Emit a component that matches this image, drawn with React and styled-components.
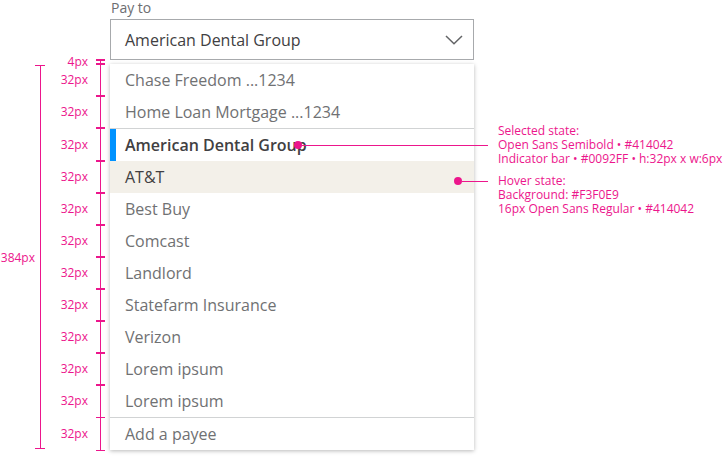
import styled, { createGlobalStyle } from "styled-components";

const PINK = "#EC168C";

const GlobalStyle = createGlobalStyle`
  body {
    margin: 0;
    background: #fff;
    font-family: "Open Sans", sans-serif;
  }
`;

const Page = styled.div`
  display: grid;
  grid-template-columns: 110px 364px;
  grid-template-rows: 19px 41px 4px 386px;
  width: 726px;
  height: 461px;
  overflow: hidden;
`;

const FieldLabel = styled.div`
  grid-column: 2;
  font-size: 14px;
  line-height: 16px;
  color: #6d6e71;
  padding-left: 1px;
`;

const Select = styled.div`
  grid-column: 2;
  box-sizing: border-box;
  display: flex;
  align-items: center;
  justify-content: space-between;
  padding: 0 10px 0 14px;
  border: 1px solid #a7a9ac;
  font-size: 16px;
  color: #414042;

  svg {
    width: 18px;
    height: 10px;
  }
`;

const Gutter = styled.div`
  grid-column: 1;
  display: flex;
`;

const TotalLabel = styled.div`
  width: 35px;
  align-self: center;
  text-align: right;
  font-size: 12px;
  color: ${PINK};
`;

const Bracket = styled.div`
  box-sizing: border-box;
  width: 10px;
  height: 384px;
  margin-top: 1px;
  border-top: 1.5px solid ${PINK};
  border-bottom: 1.5px solid ${PINK};
  background: linear-gradient(${PINK}, ${PINK}) no-repeat center / 1px 100%;
`;

const Measures = styled.div`
  display: flex;
  flex-direction: column;
`;

const MeasureRow = styled.div`
  display: flex;
  align-items: center;
  height: ${(p) => p.$h}px;
  margin-left: ${(p) => p.$indent || 0}px;
`;

const MeasureText = styled.span`
  width: 43px;
  text-align: right;
  padding-right: 8px;
  font-size: 12px;
  line-height: 12px;
  color: ${PINK};
`;

const Tick = styled.div`
  position: relative;
  width: 9px;
  height: 100%;

  &::before {
    content: "";
    position: absolute;
    left: 4px;
    top: 0;
    bottom: 0;
    width: 1px;
    background: ${PINK};
  }

  &::after {
    content: "";
    position: absolute;
    left: 0;
    top: -1px;
    width: 9px;
    height: 1.5px;
    background: ${PINK};
  }
`;

const LastTick = styled(Tick)`
  border-bottom: 1.5px solid ${PINK};
  box-sizing: border-box;
  margin-bottom: -1px;
`;

const List = styled.div`
  grid-column: 2;
  display: flex;
  flex-direction: column;
  background: #fff;
  box-shadow: 0 1px 4px rgba(0, 0, 0, 0.28);
`;

const Item = styled.div`
  position: relative;
  height: 32px;
  line-height: 32px;
  padding-left: 15px;
  font-size: 16px;
  font-weight: ${(p) => (p.$selected ? 600 : 400)};
  color: ${(p) => (p.$selected || p.$hover ? "#414042" : "#707173")};
  background: ${(p) => (p.$hover ? "#F3F0E9" : "transparent")};
  white-space: nowrap;

  ${(p) =>
    p.$selected &&
    `
    &::before {
      content: "";
      position: absolute;
      left: 0;
      top: 0;
      width: 6px;
      height: 32px;
      background: #0092FF;
    }
  `}
`;

const Divider = styled.div`
  height: 1px;
  background: #d1d3d4;
`;

const Callout = styled.div`
  position: absolute;
  left: ${(p) => p.$left}px;
  top: ${(p) => p.$top};
  transform: ${(p) => (p.$center ? "translateY(-50%)" : "none")};
  display: flex;
  align-items: ${(p) => (p.$center ? "center" : "flex-start")};
  font-weight: 400;
`;

const Connector = styled.div`
  display: flex;
  align-items: center;
  height: 14px;
`;

const Dot = styled.span`
  width: 8px;
  height: 8px;
  border-radius: 50%;
  background: ${PINK};
`;

const Lead = styled.span`
  width: ${(p) => p.$w}px;
  height: 1px;
  background: ${PINK};
`;

const Note = styled.div`
  margin-left: 10px;
  font-size: 12px;
  line-height: 14px;
  color: ${PINK};
  white-space: nowrap;
`;

const Chevron = () => (
  <svg viewBox="0 0 18 10" fill="none">
    <path d="M1 1 L9 8.8 L17 1" stroke="#636466" strokeWidth="1.5" />
  </svg>
);

const items = [
  { name: "Chase Freedom ...1234" },
  { name: "Home Loan Mortgage ...1234", divider: true },
  { name: "American Dental Group", selected: true },
  { name: "AT&T", hover: true },
  { name: "Best Buy" },
  { name: "Comcast" },
  { name: "Landlord" },
  { name: "Statefarm Insurance" },
  { name: "Verizon" },
  { name: "Lorem ipsum" },
  { name: "Lorem ipsum", divider: true },
  { name: "Add a payee" },
];

export default function App() {
  return (
    <>
      <GlobalStyle />
      <Page>
        <FieldLabel>Pay to</FieldLabel>
        <Select>
          American Dental Group
          <Chevron />
        </Select>

        <Gutter>
          <MeasureRow $h={4} $indent={45}>
            <MeasureText>4px</MeasureText>
            <Tick />
          </MeasureRow>
        </Gutter>

        <Gutter>
          <TotalLabel>384px</TotalLabel>
          <Bracket />
          <Measures>
            {items.map((it, i) => {
              const h = i > 0 && items[i - 1].divider ? 33 : 32;
              const Mark = i === items.length - 1 ? LastTick : Tick;
              return (
                <MeasureRow key={i} $h={h}>
                  <MeasureText>32px</MeasureText>
                  <Mark />
                </MeasureRow>
              );
            })}
          </Measures>
        </Gutter>

        <List>
          {items.map((it, i) => (
            <div key={i}>
              <Item $selected={it.selected} $hover={it.hover}>
                {it.name}
                {it.selected && (
                  <Callout $left={184} $top="50%" $center>
                    <Connector>
                      <Dot />
                      <Lead $w={186} />
                    </Connector>
                    <Note>
                      Selected state:
                      <br />
                      Open Sans Semibold • #414042
                      <br />
                      Indicator bar • #0092FF • h:32px x w:6px
                    </Note>
                  </Callout>
                )}
                {it.hover && (
                  <Callout $left={344} $top="13px">
                    <Connector>
                      <Dot />
                      <Lead $w={26} />
                    </Connector>
                    <Note>
                      Hover state:
                      <br />
                      Background: #F3F0E9
                      <br />
                      16px Open Sans Regular • #414042
                    </Note>
                  </Callout>
                )}
              </Item>
              {it.divider && <Divider />}
            </div>
          ))}
        </List>
      </Page>
    </>
  );
}
